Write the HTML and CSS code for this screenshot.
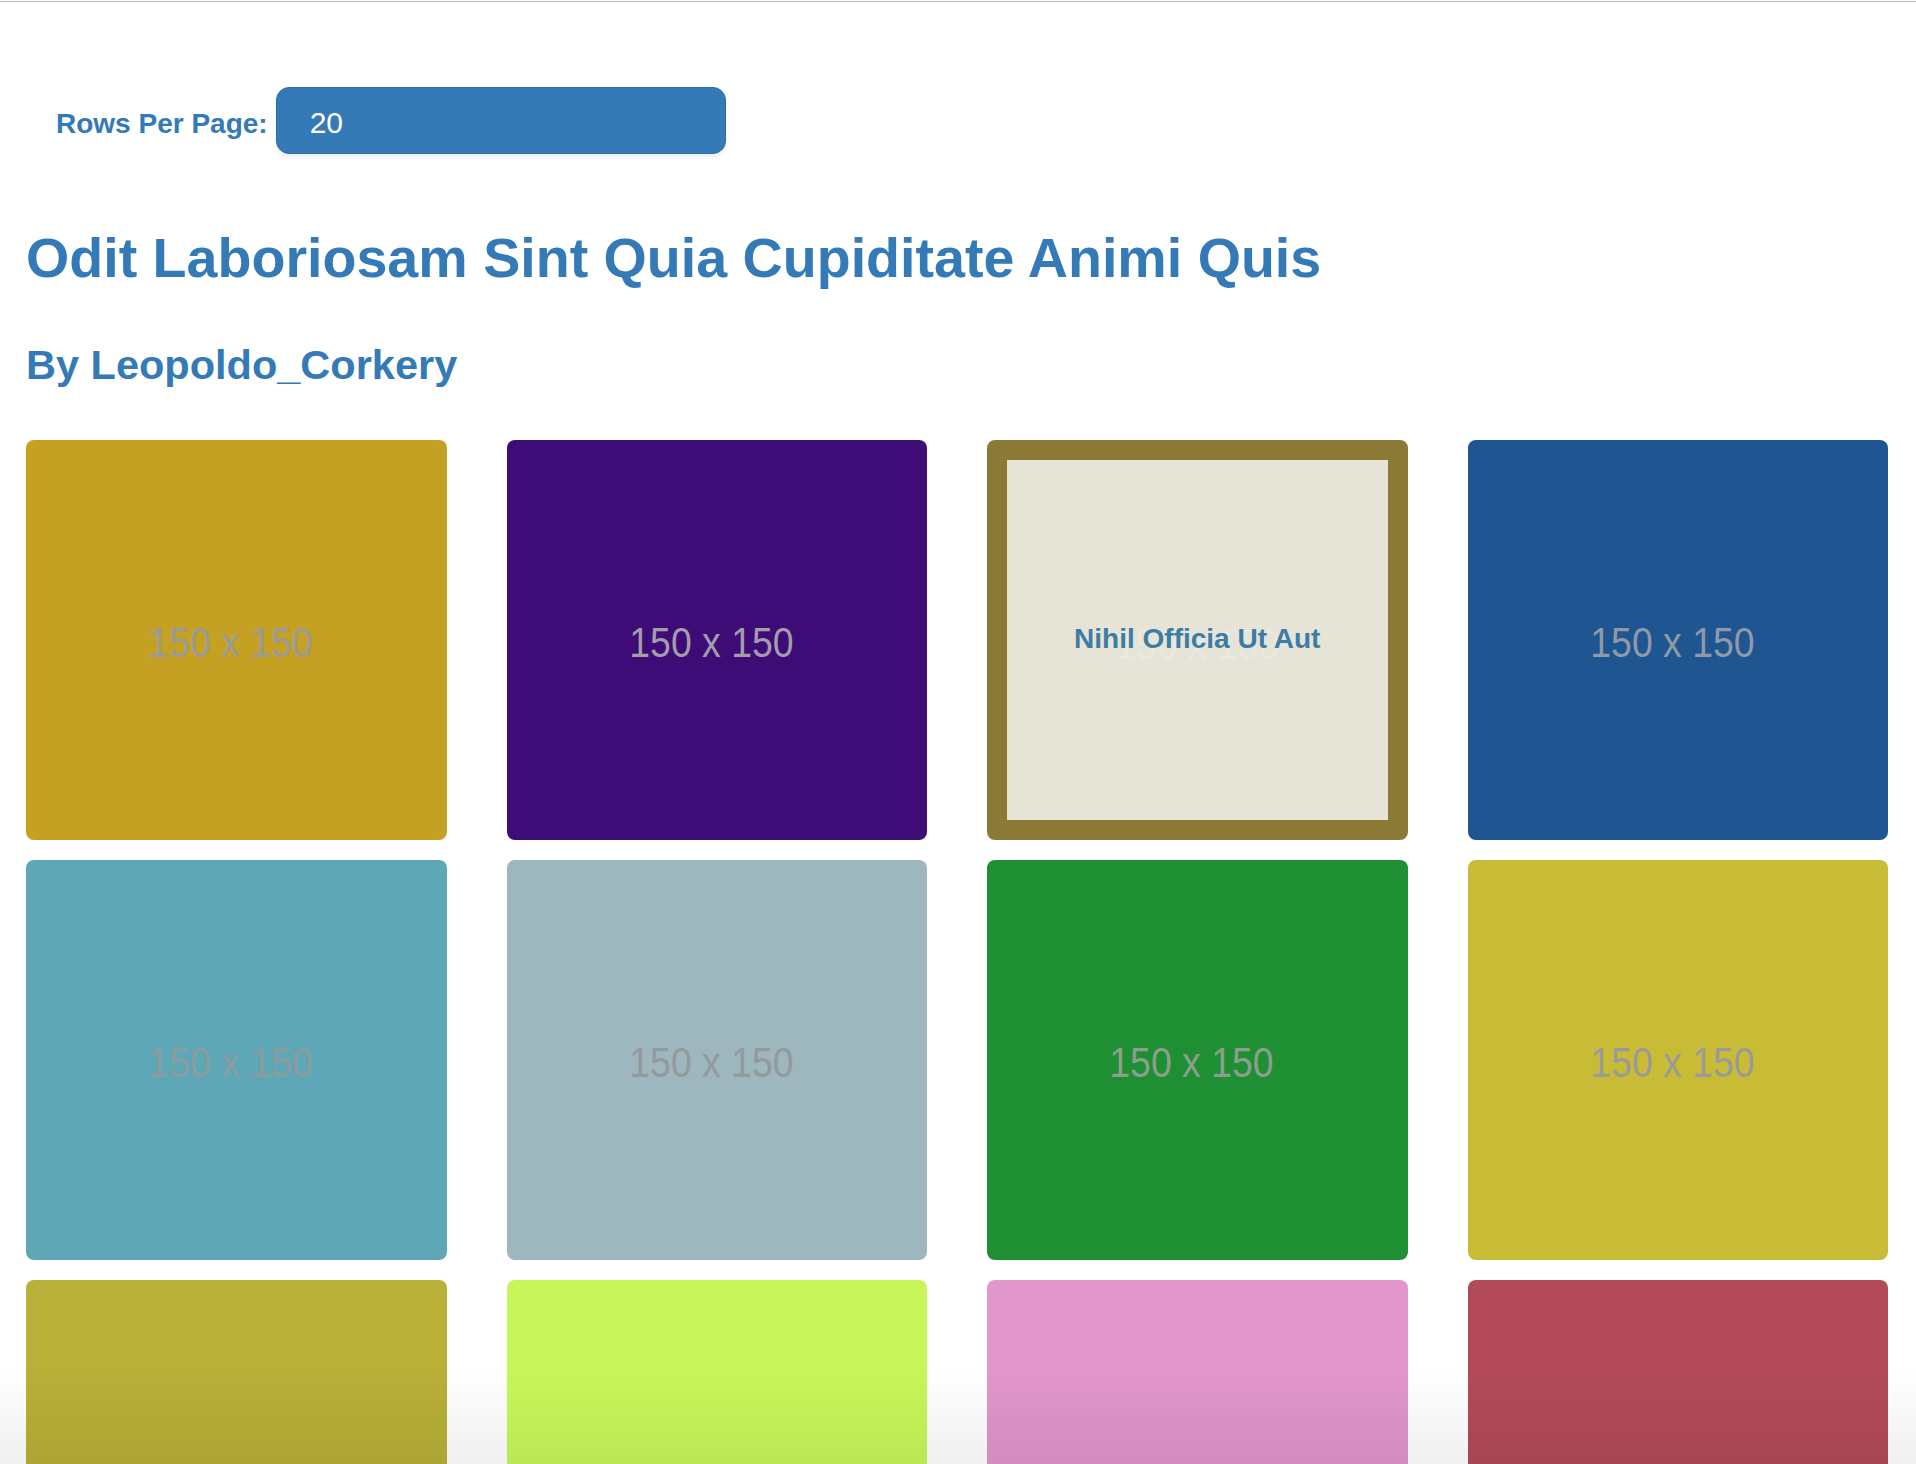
FILE: index.html
```html
<!DOCTYPE html>
<html lang="en">
<head>
<meta charset="utf-8">
<title>Odit Laboriosam Sint Quia Cupiditate Animi Quis</title>
<link rel="stylesheet" href="styles.css">
</head>
<body>
<div class="topline"></div>
<main class="page">
  <div class="controls">
    <label class="rows-label">Rows Per Page:</label>
    <div class="rows-select">20</div>
  </div>
  <h1 class="title">Odit Laboriosam Sint Quia Cupiditate Animi Quis</h1>
  <h3 class="author">By Leopoldo_Corkery</h3>
  <div class="grid">
    <div class="card c1"><span class="ph">150 x 150</span></div>
    <div class="card c2"><span class="ph">150 x 150</span></div>
    <div class="card c3 active"><span class="ph">150 x 150</span><span class="caption">Nihil Officia Ut Aut</span></div>
    <div class="card c4"><span class="ph">150 x 150</span></div>
    <div class="card c5"><span class="ph">150 x 150</span></div>
    <div class="card c6"><span class="ph">150 x 150</span></div>
    <div class="card c7"><span class="ph">150 x 150</span></div>
    <div class="card c8"><span class="ph">150 x 150</span></div>
    <div class="card c9"><span class="ph">150 x 150</span></div>
    <div class="card c10"><span class="ph">150 x 150</span></div>
    <div class="card c11"><span class="ph">150 x 150</span></div>
    <div class="card c12"><span class="ph">150 x 150</span></div>
  </div>
</main>
<div class="bottom-fade"></div>
</body>
</html>
```

FILE: styles.css
```css
html, body {
  margin: 0;
  padding: 0;
  background: #ffffff;
}

body {
  font-family: "Liberation Sans", Arial, Helvetica, sans-serif;
  color: #337ab7;
}

.topline {
  height: 1px;
  margin-top: 1px;
  background: #b8b8b8;
}

.page {
  padding: 0 28px 60px 26px;
}

.controls {
  display: flex;
  align-items: baseline;
  gap: 8px;
  margin-top: 85px;
  padding-left: 30px;
}

.rows-label {
  font-size: 28px;
  font-weight: bold;
  line-height: 28px;
  color: #337ab7;
}

.rows-select {
  box-sizing: border-box;
  width: 450px;
  height: 67px;
  padding: 4px 0 0 33px;
  line-height: 61px;
  font-size: 30px;
  color: #ffffff;
  background: #337ab7;
  border: 1px solid #2e6da4;
  border-radius: 13px;
  box-shadow: 0 4px 3px rgba(0, 0, 0, 0.05);
}

.title {
  margin: 71px 0 0 0;
  font-size: 55.6px;
  line-height: 67px;
  font-weight: bold;
  color: #337ab7;
}

.author {
  margin: 48px 0 0 0;
  font-size: 41.5px;
  line-height: 50px;
  font-weight: bold;
  color: #337ab7;
}

.grid {
  margin-top: 50px;
  display: grid;
  grid-template-columns: repeat(4, 1fr);
  column-gap: 60px;
  row-gap: 20px;
}

.card {
  position: relative;
  box-sizing: border-box;
  height: 400px;
  border-radius: 8px;
  display: flex;
  align-items: center;
  justify-content: center;
  overflow: hidden;
}

.ph {
  display: inline-block;
  margin: 5px 11px 0 0;
  font-size: 43px;
  color: #9a9a9a;
  transform: scaleX(0.87);
}

.c1 { background: #c4a023; }
.c2 { background: #3e0c77; }
.c2 .ph { color: #a39cab; }
.c3 { background: #e6e4d6; border: 20px solid #8b7a35; }
.c3 .ph { color: #eae9de; margin: 8px 0 0 0; }
.c4 { background: #1f5590; }
.c4 .ph { color: #8e9aa8; }
.c5 { background: #5ea7b6; }
.c5 .ph { color: #8b9b9e; }
.c6 { background: #9eb6bd; }
.c6 .ph { color: #929a9c; }
.c7 { background: #1e8f33; }
.c7 .ph { color: #8c9f8e; }
.c8 { background: #c8bb35; }
.c9 { background: #b8b038; }
.c10 { background: #c8f65a; }
.c11 { background: #e196cc; }
.c12 { background: #b34a59; }

.caption {
  position: absolute;
  left: 0;
  right: 0;
  top: 50%;
  transform: translateY(-52%);
  text-align: center;
  font-size: 28px;
  font-weight: bold;
  color: #3d7ca6;
}

.bottom-fade {
  position: fixed;
  left: 0;
  right: 0;
  bottom: 0;
  height: 95px;
  background: linear-gradient(to bottom, rgba(0, 0, 0, 0), rgba(0, 0, 0, 0.06));
  pointer-events: none;
}
```
